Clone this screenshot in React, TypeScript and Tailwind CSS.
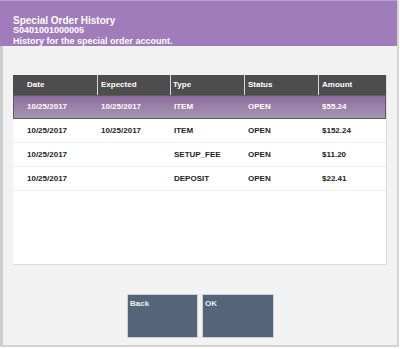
import React from "react";

const rows = [
  { date: "10/25/2017", exp: "10/25/2017", type: "ITEM", status: "OPEN", amount: "$55.24", sel: true },
  { date: "10/25/2017", exp: "10/25/2017", type: "ITEM", status: "OPEN", amount: "$152.24" },
  { date: "10/25/2017", exp: "", type: "SETUP_FEE", status: "OPEN", amount: "$11.20" },
  { date: "10/25/2017", exp: "", type: "DEPOSIT", status: "OPEN", amount: "$22.41" },
];

export default function App() {
  return (
    <div className="w-[400px] h-[349px] bg-white overflow-hidden" style={{ fontFamily: '"Liberation Sans", Arial, sans-serif' }}>
      <div className="w-[399px] h-[347px] flex flex-col bg-[#f2f2f2] border-r-2 border-b-2 border-[#d4d4d4]">
        <div className="h-[46px] bg-[#a17cba] border-t border-[#b9a0c9] px-[13px] pt-[15px] text-white font-bold">
          <div className="text-[10px] leading-[9px]">Special Order History</div>
          <div className="text-[9px] leading-[11px]">S0401001000005</div>
          <div className="text-[9px] leading-[10px]">History for the special order account.</div>
        </div>
        <div className="flex-1 flex border-l-[3px] border-[#cdcdcd]">
          <div className="flex-1 flex flex-col">
            <div className="ml-[10px] mr-[10px] mt-[29px] h-[190px] bg-white border-r border-b border-[#dcdcdc]">
              <div className="flex h-[20px] bg-[#4d4d4d] text-white text-[8px] font-bold items-center">
                <div className="w-[85px] pl-[14px] h-full flex items-center border-r border-[#d8d8d8]">Date</div>
                <div className="w-[73px] pl-[3px] h-full flex items-center border-r border-[#d8d8d8]">Expected</div>
                <div className="w-[74px] pl-[2px] h-full flex items-center border-r border-[#d8d8d8]">Type</div>
                <div className="w-[74px] pl-[3px] h-full flex items-center border-r border-[#d8d8d8]">Status</div>
                <div className="flex-1 pl-[3px] h-full flex items-center">Amount</div>
              </div>
              {rows.map((r, i) => (
                <div
                  key={i}
                  className={
                    r.sel
                      ? "flex h-[24px] items-center text-[8px] font-bold text-white bg-gradient-to-b from-[#8d6c9f] to-[#a896b2] border border-[#5c5c5c]"
                      : "flex h-[24px] items-center text-[8px] font-bold text-[#222222] border-b border-[#ededed]"
                  }
                >
                  <div className={r.sel ? "w-[84px] pl-[13px]" : "w-[85px] pl-[14px]"}>{r.date}</div>
                  <div className="w-[73px] pl-[3px]">{r.exp}</div>
                  <div className="w-[74px] pl-[3px]">{r.type}</div>
                  <div className="w-[74px] pl-[3px]">{r.status}</div>
                  <div className="flex-1 pl-[3px]">{r.amount}</div>
                </div>
              ))}
            </div>
            <div className="flex justify-center gap-[4px] mt-[29px] pl-[1px]">
              <div className="w-[71px] h-[44px] bg-[#546579] border border-[#d0d0d0] text-[#eeeeee] text-[8px] font-bold px-[2px] pt-[3px]">Back</div>
              <div className="w-[72px] h-[44px] bg-[#546579] border border-[#d0d0d0] text-[#eeeeee] text-[8px] font-bold px-[2px] pt-[3px]">OK</div>
            </div>
          </div>
        </div>
      </div>
    </div>
  );
}
